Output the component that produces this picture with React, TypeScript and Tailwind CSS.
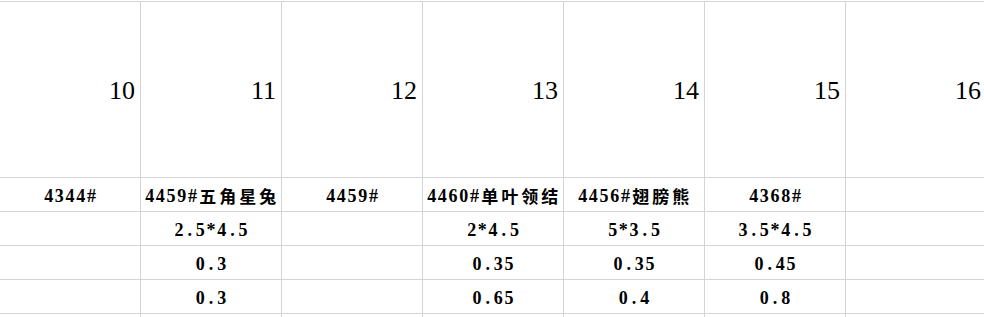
import React from 'react';

const headers = ['10', '11', '12', '13', '14', '15', '16'];

const names = ['4344#', '4459#五角星兔', '4459#', '4460#单叶领结', '4456#翅膀熊', '4368#', ''];

const rows: string[][] = [
  ['', '2.5*4.5', '', '2*4.5', '5*3.5', '3.5*4.5', ''],
  ['', '0.3', '', '0.35', '0.35', '0.45', ''],
  ['', '0.3', '', '0.65', '0.4', '0.8', ''],
  ['', '', '', '', '', '', ''],
];

const cellBase = 'border-r border-b border-[#d4d4d4] shrink-0 w-[141px]';

// fixed-pitch text like the sheet's SimSun: half width for latin, full width for CJK
const Mono: React.FC<{ text: string }> = ({ text }) => (
  <span className="flex items-center whitespace-nowrap">
    {Array.from(text).map((ch, i) =>
      /[\u4e00-\u9fff]/.test(ch) ? (
        <span
          key={i}
          className="w-[20px] shrink-0 text-center text-[17px] font-bold font-['Noto_Sans_CJK_SC',sans-serif]"
        >
          {ch}
        </span>
      ) : (
        <span
          key={i}
          className="w-[10.7px] shrink-0 text-center text-[18px] font-bold font-['Liberation_Serif','Times_New_Roman',serif]"
        >
          {ch}
        </span>
      )
    )}
  </span>
);

const App: React.FC = () => {
  return (
    <div className="w-[984px] h-[317px] overflow-hidden bg-white text-black">
      <div className="mt-px border-t border-[#d4d4d4] w-max">
        {/* big header row */}
        <div className="flex">
          {headers.map((h) => (
            <div
              key={h}
              className={`${cellBase} h-[176px] flex items-center justify-end pr-[5px] pt-[2px] text-[26px] font-['Liberation_Serif','Times_New_Roman',serif]`}
            >
              {h}
            </div>
          ))}
        </div>

        {[names, ...rows].map((r, ri) => (
          <div key={ri} className="flex">
            {r.map((v, i) => (
              <div
                key={i}
                className={`${cellBase} h-[34px] pt-[3px] flex items-center justify-center overflow-visible`}
              >
                {v && <Mono text={v} />}
              </div>
            ))}
          </div>
        ))}
      </div>
    </div>
  );
};

export default App;
